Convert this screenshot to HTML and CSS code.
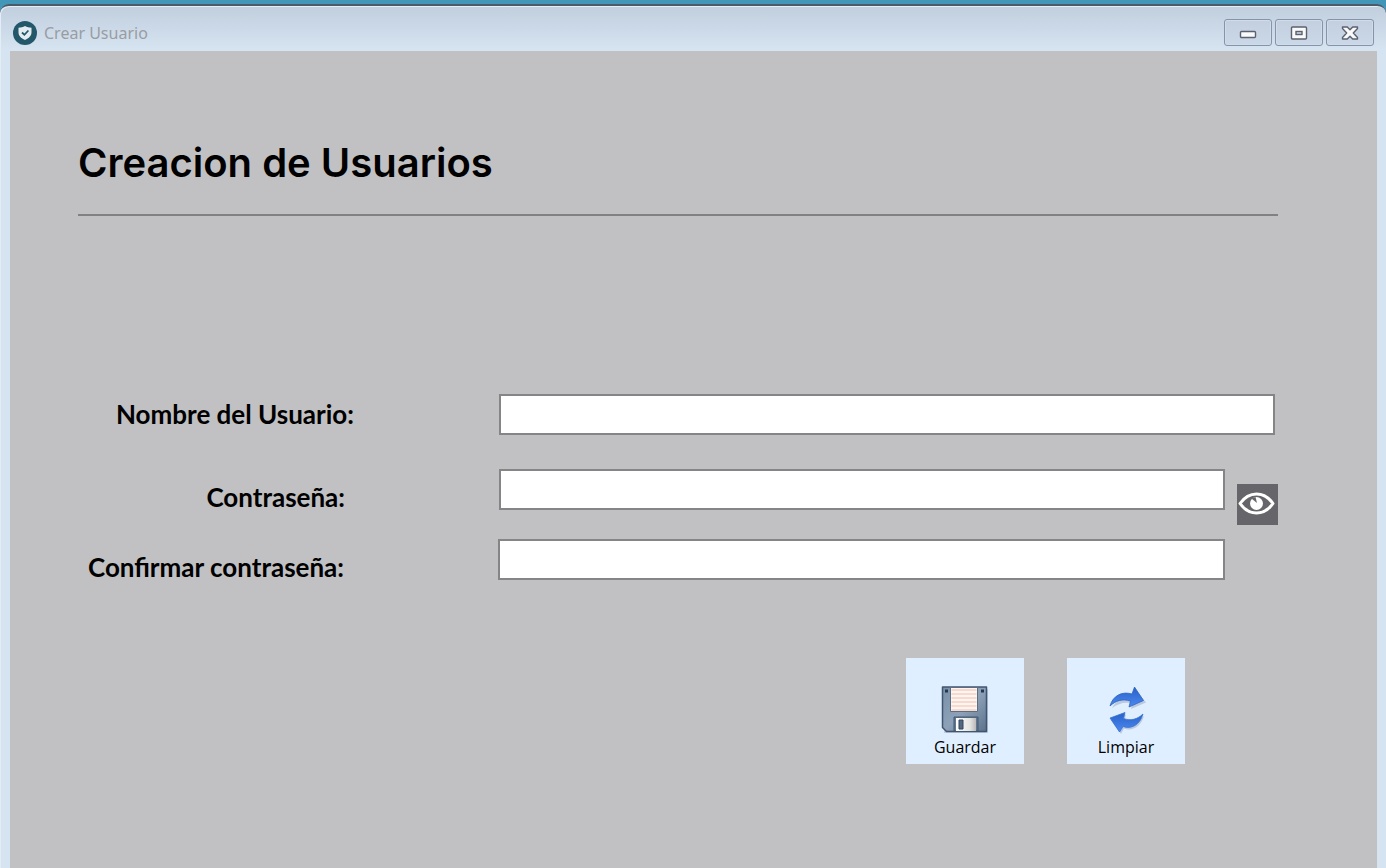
FILE: index.html
```html
<!DOCTYPE html>
<html lang="es">
<head>
<meta charset="utf-8">
<meta name="viewport" content="width=device-width, initial-scale=1">
<title>Crear Usuario</title>
<link rel="stylesheet" href="styles.css">
</head>
<body>
<div class="window">
  <header class="titlebar">
    <svg class="app-icon" viewBox="0 0 24 24" aria-hidden="true">
      <circle cx="12" cy="12" r="12" fill="#23586b"/>
      <path d="M12 5c2 1 4 1.600 6.500 1.700v4.300c0 4-2.500 6.200-6.500 8-4-1.800-6.500-4-6.500-8V6.700C8 6.600 10 6 12 5z" fill="#e3edf1"/>
      <path d="M9 11.500l2.400 2.300 4-4.300" fill="none" stroke="#23586b" stroke-width="1.800"/>
    </svg>
    <span class="title">Crear Usuario</span>
    <div class="controls">
      <button class="control" type="button" aria-label="Minimizar">
        <svg viewBox="0 0 18 16"><rect x="1.500" y="6.500" width="15" height="6" rx="1" fill="#fafafa" stroke="#5b6170" stroke-width="1.400"/></svg>
      </button>
      <button class="control" type="button" aria-label="Maximizar">
        <svg viewBox="0 0 18 16"><rect x="1.500" y="2" width="15" height="12" rx="1" fill="#fafafa" stroke="#5b6170" stroke-width="1.400"/><rect x="6" y="6.500" width="6" height="3" fill="#c9d4e2" stroke="#5b6170" stroke-width="1.400"/></svg>
      </button>
      <button class="control" type="button" aria-label="Cerrar">
        <svg viewBox="0 0 18 16"><path d="M1.500 2h4.800L9 4.800 11.700 2h4.800v1.500L12.300 8l4.200 4.500V14h-4.800L9 11.200 6.300 14H1.500v-1.500L5.700 8 1.500 3.500z" fill="#fafafa" stroke="#5b6170" stroke-width="1.400" stroke-linejoin="round"/></svg>
      </button>
    </div>
  </header>
  <main class="content">
    <h1 class="heading">Creacion de Usuarios</h1>
    <form class="form">
      <div class="row">
        <label class="label label-user" for="user">Nombre del Usuario:</label>
        <input class="field" id="user" type="text">
      </div>
      <div class="row row-password">
        <label class="label label-low" for="password">Contraseña:</label>
        <input class="field" id="password" type="password">
        <button class="reveal" type="button" aria-label="Mostrar contraseña">
          <svg viewBox="0 0 41 41">
            <path d="M3 19.500C8 12.500 13 10 19.500 10S31 12.500 36 19.500C31 26.500 26 29 19.500 29S8 26.500 3 19.500z" fill="none" stroke="#fff" stroke-width="3" stroke-linejoin="round"/>
            <circle cx="19.500" cy="19.500" r="6.500" fill="#fff"/>
            <path d="M14.500 14.500l5.500 4.500-1.500-6z" fill="#66666a"/>
          </svg>
        </button>
      </div>
      <div class="row row-confirm">
        <label class="label label-low" for="confirm">Confirmar contraseña:</label>
        <input class="field" id="confirm" type="password">
      </div>
      <div class="actions">
        <button class="action" type="button">
          <svg viewBox="0 0 48 48" aria-hidden="true">
            <defs>
              <linearGradient id="metal" x1="0" y1="0" x2="1" y2="1"><stop offset="0" stop-color="#7890a8"/><stop offset=".5" stop-color="#8da2b8"/><stop offset="1" stop-color="#5b728b"/></linearGradient>
              <linearGradient id="shutter" x1="0" x2="1"><stop offset="0" stop-color="#fff"/><stop offset=".7" stop-color="#e4e4e2"/><stop offset="1" stop-color="#b9bab9"/></linearGradient>
            </defs>
            <path d="M3 3h44v44H3z" fill="#8795a5" opacity=".35"/>
            <path d="M1.500 1h44v44.500h-40l-4-4z" fill="url(#metal)" stroke="#40566f" stroke-width="1.500" stroke-linejoin="round"/>
            <path d="M9.500 1.500h27v24h-27z" fill="#fff5f0" stroke="#5c6d83"/>
            <path d="M10.500 4h25M10.500 8h25M10.500 12h25M10.500 16h25M10.500 20h25M10.500 24h25" stroke="#f6cfc5" stroke-width="1.600"/>
            <path d="M4 3.500h3v3H4zM40 3.500h3v3h-3z" fill="#26384d"/>
            <path d="M13 31h24v14H13z" fill="#63778e" stroke="#425870"/>
            <path d="M15 32h20v13H15z" fill="url(#shutter)"/>
            <path d="M18 34h4v9h-4z" fill="#526980" stroke="#304560"/>
          </svg>
          <span>Guardar</span>
        </button>
        <button class="action" type="button">
          <svg viewBox="0 0 48 48" aria-hidden="true">
            <defs><linearGradient id="blue" x1="0" y1="0" x2="0" y2="1"><stop offset="0" stop-color="#2860c8"/><stop offset="1" stop-color="#4b8af0"/></linearGradient></defs>
            <g transform="translate(2 0)">
              <path d="M7 20C12 11 19 7 28 8.500L31 2l10 12.500L26 21l1.500-5.500C20 13.500 13 15.500 7 20z" fill="#7385a6" opacity=".35" transform="translate(1 2)"/>
              <path d="M6 20C9 9.500 18 5 28 8L30.500 1l9 13.500L25 21l1.500-6C18 12.500 12 14.500 6 20z" fill="url(#blue)" stroke="#3064be" stroke-width=".8"/>
              <path d="M39 28c-3 11-12 15.500-20 12.500L16 46 6 32l15-5.500-1.500 6C27 35 33 33.500 39 28z" fill="#7385a6" opacity=".35" transform="translate(1 2)"/>
              <path d="M39 28c-3 11-12 15.500-20 12.500L15.500 46 6 32l15-5.500-1.500 6C27 35 33 33.500 39 28z" fill="url(#blue)" stroke="#3972ce" stroke-width=".8"/>
            </g>
          </svg>
          <span>Limpiar</span>
        </button>
      </div>
    </form>
  </main>
</div>
</body>
</html>
```
FILE: styles.css
```css
* { box-sizing: border-box; }
body {
  margin: 0;
  padding-top: 4px;
  min-height: 100vh;
  display: flex;
  background: #4297b8;
  color: #000;
}
button { font: inherit; color: inherit; cursor: pointer; }
.window {
  flex: 1;
  display: flex;
  flex-direction: column;
  padding: 0 9px 0 10px;
  border-top: 2px solid #4c5966;
  border-radius: 9px 9px 0 0;
  background: linear-gradient(#c1cedd, #d6e3f1 44px);
  box-shadow: inset 1px 1px #e4edf6;
}
.titlebar {
  height: 45px;
  display: flex;
  align-items: center;
  gap: 7px;
  padding: 8px 3px 0;
}
.app-icon { width: 24px; height: 24px; }
.title { font: 16px "Noto Sans", sans-serif; color: #999da3; }
.controls { display: flex; gap: 3px; margin-left: auto; }
.control {
  width: 48px;
  height: 27px;
  padding: 0;
  display: grid;
  place-items: center;
  border: 1px solid #8594aa;
  border-radius: 3px;
  background: linear-gradient(#c3cfde, #cbd8e7);
  box-shadow: inset 0 0 0 1px #d1dce9;
}
.control svg { width: 18px; height: 16px; }
.content {
  flex: 1;
  padding: 84px 99px 80px 68px;
  background: #c1c1c3;
}
.heading {
  margin: 0;
  padding-bottom: 23px;
  border-bottom: 2px solid #818183;
  font: 600 40px/56px Inter, sans-serif;
}
.form { padding-top: 178px; }
.row { display: flex; align-items: flex-start; padding-right: 3px; }
.row-password { margin-top: 34px; padding-right: 0; }
.row-confirm { margin-top: 14px; padding-right: 53px; }
.label {
  flex: 0 0 421px;
  padding-right: 154px;
  text-align: right;
  white-space: nowrap;
  font: 700 26px/40px Lato, sans-serif;
}
.label-user { padding-right: 145px; }
.label-low { margin-top: 8px; }
.row-confirm .label { flex-basis: 420px; }
.field {
  flex: 1;
  min-width: 0;
  height: 41px;
  padding: 0 8px;
  border: 2px solid #858587;
  background: #fff;
  font: 24px Lato, sans-serif;
}
.reveal {
  width: 41px;
  height: 41px;
  margin: 15px 0 0 12px;
  padding: 0;
  border: 0;
  background: #66666a;
}
.reveal svg { display: block; }
.actions {
  display: flex;
  justify-content: flex-end;
  gap: 43px;
  margin-top: 71px;
  padding-right: 93px;
}
.action {
  width: 118px;
  height: 106px;
  padding: 27px 0 4px;
  display: flex;
  flex-direction: column;
  align-items: center;
  border: 0;
  background: #e0efff;
  font: 16px/24px "Open Sans", sans-serif;
}
.action svg { width: 48px; height: 50px; flex: none; }
```
